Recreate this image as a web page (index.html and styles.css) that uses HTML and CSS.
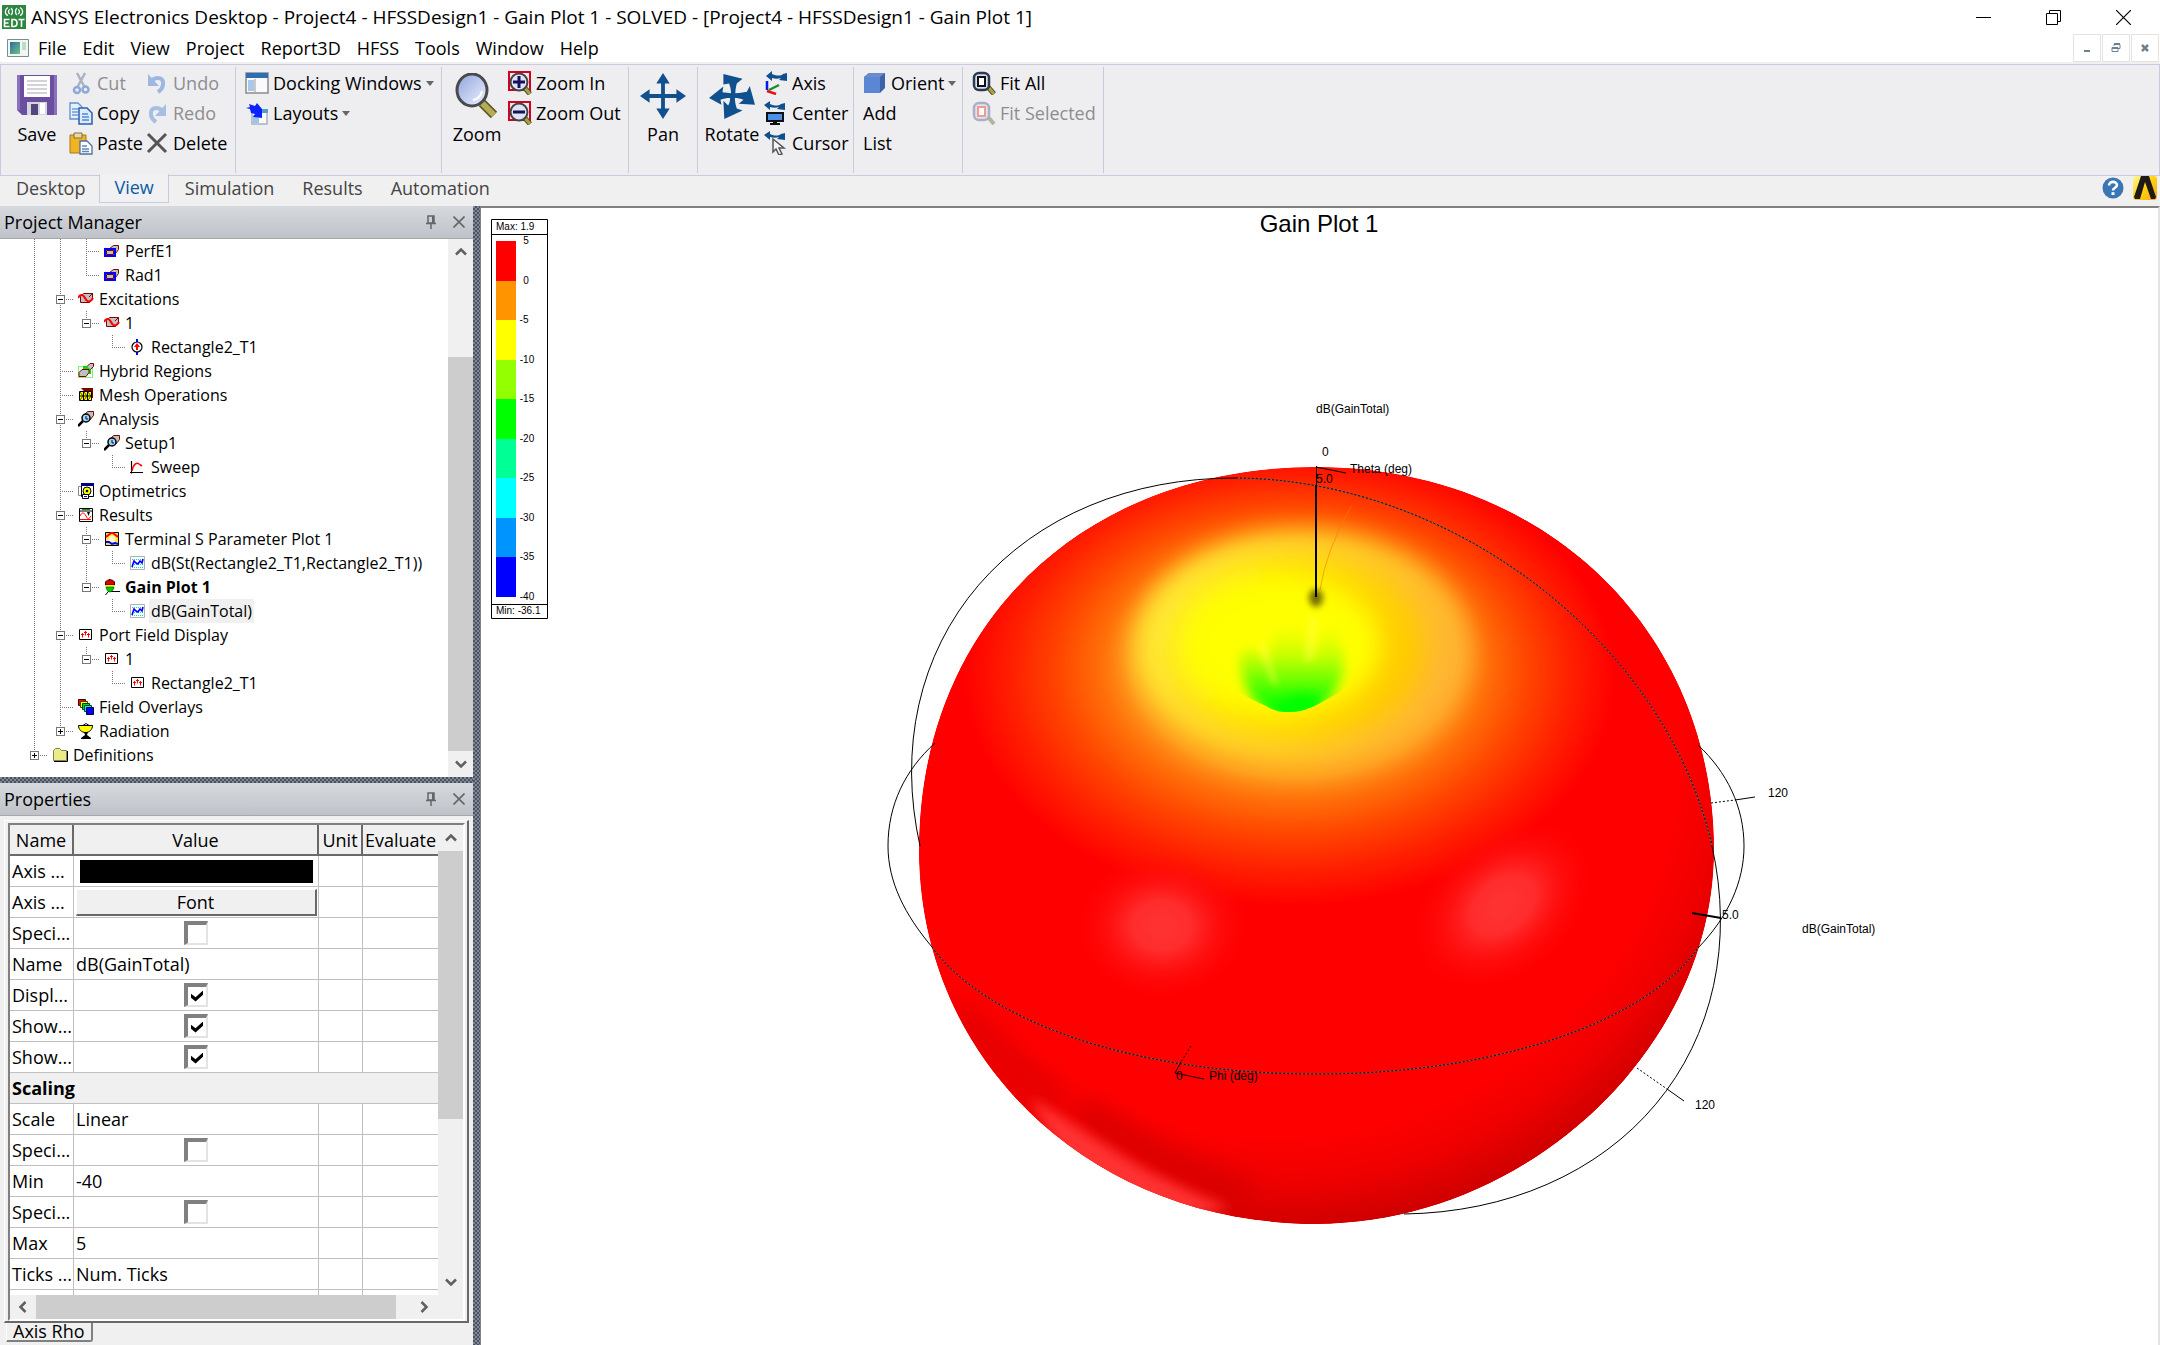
FILE: index.html
```html
<!DOCTYPE html>
<html lang="en">
<head>
<meta charset="utf-8">
<title>ANSYS Electronics Desktop - Project4</title>
<link rel="stylesheet" href="styles.css">
</head>
<body>
<svg class="defs" width="0" height="0" aria-hidden="true">
  <defs>
    <linearGradient id="lens" x1="0" y1="0" x2="1" y2="1"><stop offset="0" stop-color="#8fa3da"/><stop offset=".6" stop-color="#c9d4f2"/><stop offset="1" stop-color="#eef2ff"/></linearGradient>
    <linearGradient id="ansysGold" x1="0" y1="0" x2="1" y2="1"><stop offset="0" stop-color="#fff9a0"/><stop offset=".5" stop-color="#ffd20a"/><stop offset="1" stop-color="#f7a823"/></linearGradient>
    <linearGradient id="teal" x1="0" y1="0" x2="1" y2="1"><stop offset="0" stop-color="#2f6b9a"/><stop offset="1" stop-color="#6fc38a"/></linearGradient>
  </defs>
  <symbol id="i-edt" viewBox="0 0 24 24"><path fill="#2e8540" d="M0 0h24v24H0z"/><g fill="none" stroke="#fff" stroke-width="1.3"><path d="M9 3c2 1.500 2 5.500 0 7M6 2.500c-3.500 2-3.500 6.500 0 8M8 4.500c-2 .8-2 3.500 0 4.300M15 3c-2 1.500-2 5.500 0 7M18 2.500c3.500 2 3.500 6.500 0 8M16 4.500c2 .8 2 3.500 0 4.300"/><path stroke-width="1.600" d="M7.500 14.500h-5v7h5M2.500 18h4M10 14.500v7h2c4 0 4-7 0-7zM16.500 14.500h6M19.500 14.500V22"/></g></symbol>
  <symbol id="i-doc" viewBox="0 0 22 18"><path fill="#f4f6f4" stroke="#7d8a92" d="M.5.5h21v17H.5z"/><path fill="url(#teal)" d="M3 3h10v12H3z"/><path fill="#b9dfc8" d="M15 3h4v8h-4z"/></symbol>
  <symbol id="i-save" viewBox="0 0 40 40"><path fill="#6a4fa0" d="M0 0h40v40H5l-5-5z"/><path fill="#8a72bd" d="M0 0h3v35H0zM37 0h3v40h-3z"/><path fill="#fdfdfe" d="M7 1h26v21H7z"/><path stroke="#c4c4cc" stroke-width="1.500" d="M10 6h20M10 10h20M10 14h20M10 18h20"/><path fill="#d6d6de" d="M10 27h20v13H10z"/><path fill="#55447e" d="M14 29h7v11h-7z"/><path fill="#fff" d="M23 28h5v11h-5z"/></symbol>
  <symbol id="i-cut" viewBox="0 0 24 24"><path stroke="#a9b3c2" stroke-width="2.500" fill="none" d="M8 2l7 13M16 2L9 15"/><g fill="none" stroke="#8ea9d8" stroke-width="2.500"><circle cx="8" cy="19" r="3"/><circle cx="16.500" cy="18.500" r="3"/></g></symbol>
  <symbol id="i-copy" viewBox="0 0 24 24"><path fill="#e6f0fd" stroke="#5f8fd0" stroke-width="1.300" d="M1 2h8l4 4v12H1z"/><path stroke="#6e9bd8" stroke-width="1.500" d="M3 8h6M3 11h6M3 14h6"/><path fill="#dcebff" stroke="#2d5fae" stroke-width="1.500" d="M10 7h8l5 5v11H10z"/><path stroke="#5088d4" stroke-width="1.500" d="M13 13h6M13 16h7M13 19h7"/></symbol>
  <symbol id="i-paste" viewBox="0 0 24 24"><path fill="#f0b323" stroke="#a87817" d="M1 4h16v18H1z"/><path fill="#e8d9a0" stroke="#80703c" d="M5 2h8v5H5z"/><path fill="#fff" stroke="#4f6f9c" stroke-width="1.300" d="M11 10h7l5 5v8H11z"/><path stroke="#5f87bd" stroke-width="1.300" d="M13 15h5M13 18h7M13 20.500h7"/></symbol>
  <symbol id="i-undo" viewBox="0 0 24 24"><path fill="none" stroke="#9db8e0" stroke-width="4" d="M7 9c6-4 12-2 11 5-.4 3-2 5-5 7"/><path fill="#9db8e0" d="M3 3v12h11z"/></symbol>
  <symbol id="i-redo" viewBox="0 0 24 24"><path fill="none" stroke="#a6bee2" stroke-width="4" d="M17 9C11 5 5 7 6 14c.4 3 2 5 5 7"/><path fill="#a6bee2" d="M21 3v12H10z"/></symbol>
  <symbol id="i-delete" viewBox="0 0 24 24"><path stroke="#555" stroke-width="3" fill="none" d="M3 3l18 18M21 3L3 21"/></symbol>
  <symbol id="i-dock" viewBox="0 0 24 24"><path fill="#fafafa" stroke="#8a8a90" stroke-width="1.500" d="M1 2h22v20H1z"/><path fill="#2f6db5" d="M1 2h22v5H1z"/><path fill="#a9c8e8" d="M3 9h6v11H3z"/><path stroke="#999" d="M10 8v13"/></symbol>
  <symbol id="i-layout" viewBox="0 0 24 24"><path fill="#fafafa" stroke="#a8b4c0" stroke-width="1.500" d="M7 9h15v14H7z"/><path fill="#5a9ac8" d="M12 8h11v4H12z"/><path fill="#9bc6e8" d="M8 14h6v8H8z"/><path fill="#0a22ff" d="M1 7l4-1-1-3 6 2 2-3 5 6v9l-9-1 2-3-4-1-1-4z"/></symbol>
  <symbol id="i-zoom" viewBox="0 0 44 46"><path stroke="#5c5620" stroke-width="9" d="M27 30l12 12"/><path stroke="#b5ac58" stroke-width="6" d="M27 30l12 12"/><ellipse cx="17" cy="17" rx="15" ry="16" fill="url(#lens)" stroke="#4a4a4e" stroke-width="3"/><path fill="none" stroke="#fff" stroke-width="2" d="M18 27c5-1 8-4 9-9"/></symbol>
  <symbol id="i-zin" viewBox="0 0 24 24"><path fill="none" stroke="#d4001c" stroke-width="2" d="M1 1h21v18H1z"/><path stroke="#555020" stroke-width="5" d="M16 16l6 7"/><path stroke="#aaa24a" stroke-width="3" d="M17 17l5 6"/><circle cx="11" cy="11" r="8.500" fill="#dfe3f6" stroke="#444" stroke-width="2"/><path stroke="#17105c" stroke-width="3" d="M5 11h12M11 5v12"/></symbol>
  <symbol id="i-zout" viewBox="0 0 24 24"><path fill="none" stroke="#d4001c" stroke-width="2" d="M1 1h21v18H1z"/><path stroke="#555020" stroke-width="5" d="M16 16l6 7"/><path stroke="#aaa24a" stroke-width="3" d="M17 17l5 6"/><circle cx="11" cy="11" r="8.500" fill="#dfe3f6" stroke="#444" stroke-width="2"/><path stroke="#17105c" stroke-width="3" d="M5 11h12"/></symbol>
  <symbol id="i-pan" viewBox="0 0 48 48"><path fill="#10508f" d="M24 0l7 11h-5v11h12v-5l10 7-10 7v-5H26v11h5l-7 11-7-11h5V26H10v5L0 24l10-7v5h12V11h-5z"/></symbol>
  <symbol id="i-rotate" viewBox="0 0 48 48"><path fill="#10508f" d="M15 1l20 5-6 5c-1 4-1.500 7-1.500 10 4 0 8-.5 12-1.500l3-6L48 33l-17-1 5-4c-3-1.500-6-2-9-2 0 4 1 8 2 11l6 2-19 9-1-19 5 5c1.500-3 2-5 2-8-4 0-7 .7-10 2l1 5L0 26l15-12-1 6c3 0 6 1 9 1 0-4-1-7-2-10l-6 1z"/></symbol>
  <symbol id="i-axis" viewBox="0 0 24 24"><path fill="#10508f" d="M2 5l6-5v3c5 2 9 2 11 0l4-1v8l-8-1 2-2c-3 1-6 1-9 0v3z"/><path stroke="#0818f0" stroke-width="2.500" d="M3 10v9"/><path stroke="#e81010" stroke-width="2.500" d="M3 20l9 3"/><path stroke="#1f8a2c" stroke-width="2.500" d="M5 19l10-5"/></symbol>
  <symbol id="i-center" viewBox="0 0 24 24"><path fill="#10508f" d="M0 4l6-4v3c5 2 8 2 11 0l4-1v7l-8-1 2-2c-3 1-6 1-9 0v3z"/><path fill="#111" d="M2 11h18v10H2zM9 21h4v3H9zM6 22h10v2H6z"/><path fill="#4a90e8" d="M4 13h14v6H4z"/></symbol>
  <symbol id="i-cursor" viewBox="0 0 24 24"><path fill="#10508f" d="M0 4l6-4v3c5 2 8 2 11 0l4-1v7l-8-1 2-2c-3 1-6 1-9 0v3z"/><path fill="#f4f4f6" stroke="#555" stroke-width="1.500" d="M9 8v13l3-3 3 6 3-1-3-6h5z"/></symbol>
  <symbol id="i-orient" viewBox="0 0 24 24"><path fill="#3e62a8" d="M1 6l5-4h16v15l-5 5H1z"/><path fill="#5a86d4" d="M1 6h16v16H1z"/><path fill="#6a8cc8" d="M1 6l5-4h16l-5 4z"/></symbol>
  <symbol id="i-fit" viewBox="0 0 24 24"><path stroke="#555020" stroke-width="5" d="M16 16l6 7"/><path stroke="#aaa24a" stroke-width="3" d="M17 17l5 6"/><rect x="2" y="2" width="15" height="17" rx="5" fill="#d8dff4" stroke="#2e3a50" stroke-width="2.500"/><path fill="#fff" stroke="#111" stroke-width="2" d="M6 6h7v9H6z"/></symbol>
  <symbol id="i-fitsel" viewBox="0 0 24 24"><path stroke="#b4b29c" stroke-width="4" d="M16 16l6 7"/><rect x="2" y="2" width="15" height="17" rx="5" fill="#dfe3f0" stroke="#aab0c4" stroke-width="2.500"/><path fill="#fff" stroke="#f49a90" stroke-width="2" d="M6 6h7v9H6z"/></symbol>
  <symbol id="i-help" viewBox="0 0 22 22"><circle cx="11" cy="11" r="10.500" fill="#3a76b4"/><path fill="none" stroke="#fff" stroke-width="2.600" d="M7 8.500c0-5 8-4.500 8-.5 0 3-4 2.500-4 5.500"/><path fill="#fff" d="M9.500 15.200h3v2.800h-3z"/></symbol>
  <symbol id="i-ansys" viewBox="0 0 24 24"><rect width="24" height="24" rx="3" fill="url(#ansysGold)"/><path fill="#1f1a17" d="M8 0h8l7 21-1 2h-4L12 6 7 23H2l-1-2z"/></symbol>
  <symbol id="i-pin" viewBox="0 0 12 14"><path fill="none" stroke="#666" stroke-width="1.500" d="M3 1h6v7H3zM1 8.500h10M6 9v5"/><path fill="#666" d="M7 1h2v7H7z"/></symbol>
  <symbol id="i-x" viewBox="0 0 12 12"><path fill="none" stroke="#666" stroke-width="1.600" d="M.5.5l11 11M11.500.5L.5 11.500"/></symbol>
  <symbol id="i-up" viewBox="0 0 12 10"><path fill="none" stroke="#606060" stroke-width="2.500" d="M1 7.500l5-5 5 5"/></symbol>

  <symbol id="t-box" viewBox="0 0 16 16"><path fill="#c0c0c0" stroke="#800000" d="M5.500 5.500L9.500 2.500h5v4l-3 4"/><path fill="#c0c0c0" stroke="#00f" stroke-width="2" d="M1 6h10v7H1z"/><path fill="none" stroke="#800000" d="M2.500 7.500h7v4h-7z"/></symbol>
  <symbol id="t-exc" viewBox="0 0 16 16"><path fill="#c0c0c0" stroke="#800000" d="M2.500 11.500v-6l3-3h9v6l-3 3z"/><path fill="none" stroke="#800000" d="M11 6l3.500-3.500"/><path fill="none" stroke="#f00" stroke-width="2" d="M0 7c2-4 5-4 7 0s5 5 8 0"/></symbol>
  <symbol id="t-port" viewBox="0 0 16 16"><path stroke="#00f" stroke-width="2" d="M7 0v4M7 12v4"/><circle cx="7" cy="8" r="5" fill="#fff" stroke="#000" stroke-width="1.200"/><path fill="#f00" d="M7 4l3 4H8v3H6V8H4z"/></symbol>
  <symbol id="t-hyb" viewBox="0 0 16 16"><path fill="#00e000" d="M5 3h8v8H5z"/><path fill="none" stroke="#0d0" stroke-dasharray="1 1" d="M.5 3.500h14v11H.5z"/><path fill="#c0c0c0" stroke="#800000" d="M9 3.500l3-3h3.500v3l-3 3M1 12.500v-3l3-3h7v3l-3 4H1z"/></symbol>
  <symbol id="t-mesh" viewBox="0 0 16 16"><path fill="#800000" d="M3 1h12v10h-3z"/><path fill="#ff0" stroke="#000" d="M1.500 4.500h12v9h-12zM1.500 9h12M5.500 4.500v9M9.500 4.500v9"/><path stroke="#000" stroke-width=".7" d="M2 5l3 4M6 5l3 4M10 5l3 4M2 13l3-4M6 13l3-4M10 13l3-4"/></symbol>
  <symbol id="t-ana" viewBox="0 0 16 16"><path fill="#c0c0c0" stroke="#800000" d="M5.500 5l4-4.500h6v4l-4 5"/><path stroke="#000" stroke-width="2.500" d="M0 15l5-5"/><circle cx="8" cy="7" r="4" fill="#9ed8e8" stroke="#000" stroke-width="1.500"/><path fill="none" stroke="#000080" d="M8 5v3h2"/></symbol>
  <symbol id="t-sweep" viewBox="0 0 16 16"><path fill="none" stroke="#000" stroke-width="1.200" d="M1.500 2v12.500M0 13.500h13"/><path fill="none" stroke="#f00" stroke-width="1.400" d="M2 12c1-7 5-9 7-7 1 1 2 1 3 2"/></symbol>
  <symbol id="t-opt" viewBox="0 0 16 16"><path fill="#fff" stroke="#888" d="M.5 3.500h7v9h-7z"/><path fill="#fff" stroke="#000" d="M3.500 1.500h12v12h-12z"/><path fill="#000080" d="M3 0h13v3H3z"/><circle cx="9" cy="8" r="4" fill="#ff0" stroke="#000"/><circle cx="9" cy="8" r="1.300"/><path fill="#fff" stroke="#000" d="M4.500 11.500h6v4h-6z"/><path stroke="#00f" d="M6 13.500h3"/></symbol>
  <symbol id="t-res" viewBox="0 0 16 16"><path fill="#fff" stroke="#000" d="M1.500 1.500h13v13h-13z"/><path fill="#00a000" d="M4 2h8v1H4z"/><path stroke="#000" d="M2 4h12"/><path fill="none" stroke="#f00" d="M2 9c2-4 4-4 6 0s3 3 5 0M2 12.500h11"/><path fill="#000" d="M9 5h3l-1.500 4z"/></symbol>
  <symbol id="t-plot" viewBox="0 0 16 16"><path fill="#ffe040" stroke="#000" d="M1.500 1.500h13v13h-13z"/><circle cx="8" cy="8" r="3.500" fill="#fff8c0"/><path fill="none" stroke="#f00" stroke-width="2" d="M2 6l5-4h2l5 4"/><path fill="none" stroke="#00f" stroke-width="2" d="M2 11l3 0 3 2 3-1 3 1"/></symbol>
  <symbol id="t-trace" viewBox="0 0 16 16"><path fill="#fff" stroke="#b0b0b0" d="M.5 1.500h14v13H.5z"/><path stroke="#0dd" stroke-dasharray="1 1" d="M2 4.500h11M2 9.500h11M2 12.500h11"/><path fill="none" stroke="#00f" stroke-width="1.600" d="M2 12l2-6 2 2 2 1 2-3 2 2 1-4"/></symbol>
  <symbol id="t-gain" viewBox="0 0 16 16"><path fill="none" stroke="#000" d="M5.500 0v11l-4 5M6 12.500h10"/><path fill="#d00" stroke="#400" d="M1.500 3c2-3 7-3 9 0v3h-9z"/><path fill="#ff0" d="M2 6h8v2H2z"/><path fill="#0c0" stroke="#040" stroke-width=".6" d="M2 8h8c0 3-3 5-4 5s-4-2-4-5z"/></symbol>
  <symbol id="t-pfd" viewBox="0 0 16 16"><path fill="#fff" stroke="#000" d="M1.500 2.500h12v10h-12z"/><path fill="none" stroke="#f00" d="M4.500 10.500V6M7.500 8.500V4M10.500 10.500V6M3 7.500h3M6 5.500h3M9 7.500h3"/></symbol>
  <symbol id="t-field" viewBox="0 0 16 16"><path fill="#f00" stroke="#400" d="M.5.5h7v6h-7z"/><path fill="#ff0" stroke="#440" d="M2.500 2.500h7v6h-7z"/><path fill="#0d0" stroke="#040" d="M4.500 4.500h7v6h-7z"/><path fill="#0ee" stroke="#044" d="M6.500 6.500h7v6h-7z"/><path fill="#00f" stroke="#004" d="M8.500 8.500h7v7h-7z"/></symbol>
  <symbol id="t-rad" viewBox="0 0 16 16"><path fill="none" stroke="#000" d="M4 3l4-2.500L12 3"/><path fill="#ff0" stroke="#000" d="M.5 2.500h14c0 4-3 7-7 7s-7-3-7-7z"/><path fill="#000" d="M6 9h4l-1 3 4 3v1H3v-1l4-3z"/></symbol>
  <symbol id="t-fold" viewBox="0 0 16 16"><path fill="#ecec86" stroke="#808060" d="M1.500 13.500v-10l2-2h4l2 2h5v10z"/><path fill="none" stroke="#000" d="M2 14.500h13.500V4"/></symbol>
</svg>

<div class="app">
  <header class="titlebar">
    <svg class="i24"><use href="#i-edt"/></svg>
    <span class="title">ANSYS Electronics Desktop - Project4 - HFSSDesign1 - Gain Plot 1 - SOLVED - [Project4 - HFSSDesign1 - Gain Plot 1]</span>
    <div class="winctl">
      <button aria-label="Minimize"><svg width="15" height="15"><path stroke="#000" d="M0 7.500h15"/></svg></button>
      <button aria-label="Restore"><svg width="15" height="15"><path fill="none" stroke="#000" d="M.5 3.500h11v11H.5zM3.500 3V.5h11v11H12"/></svg></button>
      <button aria-label="Close"><svg width="15" height="15"><path stroke="#000" stroke-width="1.200" d="M0 0l15 15M15 0L0 15"/></svg></button>
    </div>
  </header>
  <nav class="menubar">
    <svg class="docicon"><use href="#i-doc"/></svg>
    <button>File</button><button>Edit</button><button>View</button><button>Project</button><button>Report3D</button><button>HFSS</button><button>Tools</button><button>Window</button><button>Help</button>
    <div class="mdictl">
      <button aria-label="Minimize window"><svg width="10" height="10"><path fill="#718090" d="M2 7h6v2H2z"/></svg></button>
      <button aria-label="Restore window"><svg width="10" height="10"><path fill="none" stroke="#718090" d="M1 4.500h6v4H1zM3 3V1.500h6v4H7"/><path stroke="#718090" stroke-width="2" d="M1 5h6M3 1h6"/></svg></button>
      <button aria-label="Close window"><svg width="10" height="10"><path stroke="#718090" stroke-width="2.500" d="M2 2l6 6M8 2L2 8"/></svg></button>
    </div>
  </nav>

  <section class="ribbon">
    <div class="group g-clip">
      <button class="big"><svg class="i40"><use href="#i-save"/></svg>Save</button>
      <div class="col c-copy">
        <button class="off"><svg class="i24"><use href="#i-cut"/></svg>Cut</button>
        <button><svg class="i24"><use href="#i-copy"/></svg>Copy</button>
        <button><svg class="i24"><use href="#i-paste"/></svg>Paste</button>
      </div>
      <div class="col">
        <button class="off"><svg class="i24"><use href="#i-undo"/></svg>Undo</button>
        <button class="off"><svg class="i24"><use href="#i-redo"/></svg>Redo</button>
        <button><svg class="i24"><use href="#i-delete"/></svg>Delete</button>
      </div>
    </div>
    <div class="group g-win">
      <div class="col">
        <button><svg class="i24"><use href="#i-dock"/></svg>Docking Windows<span class="caret"></span></button>
        <button><svg class="i24"><use href="#i-layout"/></svg>Layouts<span class="caret"></span></button>
      </div>
    </div>
    <div class="group g-zoom">
      <button class="big"><svg class="i46"><use href="#i-zoom"/></svg>Zoom</button>
      <div class="col">
        <button><svg class="i24"><use href="#i-zin"/></svg>Zoom In</button>
        <button><svg class="i24"><use href="#i-zout"/></svg>Zoom Out</button>
      </div>
    </div>
    <div class="group g-pan">
      <button class="big"><svg class="i46"><use href="#i-pan"/></svg>Pan</button>
    </div>
    <div class="group g-rot">
      <button class="big"><svg class="i46"><use href="#i-rotate"/></svg>Rotate</button>
      <div class="col">
        <button><svg class="i24"><use href="#i-axis"/></svg>Axis</button>
        <button><svg class="i24"><use href="#i-center"/></svg>Center</button>
        <button><svg class="i24"><use href="#i-cursor"/></svg>Cursor</button>
      </div>
    </div>
    <div class="group g-ori">
      <div class="col">
        <button><svg class="i24"><use href="#i-orient"/></svg>Orient<span class="caret"></span></button>
        <button>Add</button>
        <button>List</button>
      </div>
    </div>
    <div class="group g-fit">
      <div class="col">
        <button><svg class="i24"><use href="#i-fit"/></svg>Fit All</button>
        <button class="off"><svg class="i24"><use href="#i-fitsel"/></svg>Fit Selected</button>
      </div>
    </div>
  </section>

  <nav class="tabs">
    <button>Desktop</button><button class="on">View</button><button>Simulation</button><button>Results</button><button>Automation</button>
    <div class="tabicons">
      <button aria-label="Help"><svg class="i22"><use href="#i-help"/></svg></button>
      <button aria-label="ANSYS"><svg class="i24"><use href="#i-ansys"/></svg></button>
    </div>
  </nav>

  <main class="work">
    <aside class="side">
      <section class="pane">
        <header class="panehead"><h2>Project Manager</h2><button aria-label="Pin"><svg class="pin"><use href="#i-pin"/></svg></button><button aria-label="Close pane"><svg class="x"><use href="#i-x"/></svg></button></header>
        <div class="treebox">
          <ul class="tree">
            <li><i class="v"></i><i class="v"></i><i class="t"></i><svg><use href="#t-box"/></svg><span>PerfE1</span></li>
            <li><i class="v"></i><i class="v"></i><i class="l"></i><svg><use href="#t-box"/></svg><span>Rad1</span></li>
            <li><i class="v"></i><i class="t"><b class="minus"></b></i><svg><use href="#t-exc"/></svg><span>Excitations</span></li>
            <li><i class="v"></i><i class="v"></i><i class="l"><b class="minus"></b></i><svg><use href="#t-exc"/></svg><span>1</span></li>
            <li><i class="v"></i><i class="v"></i><i></i><i class="l"></i><svg><use href="#t-port"/></svg><span>Rectangle2_T1</span></li>
            <li><i class="v"></i><i class="t"></i><svg><use href="#t-hyb"/></svg><span>Hybrid Regions</span></li>
            <li><i class="v"></i><i class="t"></i><svg><use href="#t-mesh"/></svg><span>Mesh Operations</span></li>
            <li><i class="v"></i><i class="t"><b class="minus"></b></i><svg><use href="#t-ana"/></svg><span>Analysis</span></li>
            <li><i class="v"></i><i class="v"></i><i class="l"><b class="minus"></b></i><svg><use href="#t-ana"/></svg><span>Setup1</span></li>
            <li><i class="v"></i><i class="v"></i><i></i><i class="l"></i><svg><use href="#t-sweep"/></svg><span>Sweep</span></li>
            <li><i class="v"></i><i class="t"></i><svg><use href="#t-opt"/></svg><span>Optimetrics</span></li>
            <li><i class="v"></i><i class="t"><b class="minus"></b></i><svg><use href="#t-res"/></svg><span>Results</span></li>
            <li><i class="v"></i><i class="v"></i><i class="t"><b class="minus"></b></i><svg><use href="#t-plot"/></svg><span>Terminal S Parameter Plot 1</span></li>
            <li><i class="v"></i><i class="v"></i><i class="v"></i><i class="l"></i><svg><use href="#t-trace"/></svg><span>dB(St(Rectangle2_T1,Rectangle2_T1))</span></li>
            <li><i class="v"></i><i class="v"></i><i class="l"><b class="minus"></b></i><svg><use href="#t-gain"/></svg><span class="strong">Gain Plot 1</span></li>
            <li><i class="v"></i><i class="v"></i><i></i><i class="l"></i><svg><use href="#t-trace"/></svg><span class="sel">dB(GainTotal)</span></li>
            <li><i class="v"></i><i class="t"><b class="minus"></b></i><svg><use href="#t-pfd"/></svg><span>Port Field Display</span></li>
            <li><i class="v"></i><i class="v"></i><i class="l"><b class="minus"></b></i><svg><use href="#t-pfd"/></svg><span>1</span></li>
            <li><i class="v"></i><i class="v"></i><i></i><i class="l"></i><svg><use href="#t-pfd"/></svg><span>Rectangle2_T1</span></li>
            <li><i class="v"></i><i class="t"></i><svg><use href="#t-field"/></svg><span>Field Overlays</span></li>
            <li><i class="v"></i><i class="l"><b class="plus"></b></i><svg><use href="#t-rad"/></svg><span>Radiation</span></li>
            <li><i class="l"><b class="plus"></b></i><svg><use href="#t-fold"/></svg><span>Definitions</span></li>
          </ul>
          <div class="vscroll">
            <button aria-label="Scroll up"><svg class="arw"><use href="#i-up"/></svg></button>
            <div class="track tree-track"><div class="thumb"></div></div>
            <button aria-label="Scroll down"><svg class="arw down"><use href="#i-up"/></svg></button>
          </div>
        </div>
      </section>
      <div class="hsplit"></div>
      <section class="pane props">
        <header class="panehead"><h2>Properties</h2><button aria-label="Pin"><svg class="pin"><use href="#i-pin"/></svg></button><button aria-label="Close pane"><svg class="x"><use href="#i-x"/></svg></button></header>
        <div class="frame">
          <div class="grid">
            <div class="tablebox">
              <table>
                <colgroup><col class="w-name"><col class="w-value"><col class="w-unit"><col class="w-eval"></colgroup>
                <thead><tr><th>Name</th><th>Value</th><th>Unit</th><th class="last">Evaluate</th></tr></thead>
                <tbody>
                  <tr><td>Axis ...</td><td class="ctl"><button class="swatch" aria-label="Axis color"></button></td><td></td><td></td></tr>
                  <tr><td>Axis ...</td><td class="ctl"><button class="fontbtn">Font</button></td><td></td><td></td></tr>
                  <tr><td><label for="k1">Speci...</label></td><td class="ctl"><input type="checkbox" id="k1"></td><td></td><td></td></tr>
                  <tr><td>Name</td><td>dB(GainTotal)</td><td></td><td></td></tr>
                  <tr><td><label for="k2">Displ...</label></td><td class="ctl"><input type="checkbox" id="k2" checked></td><td></td><td></td></tr>
                  <tr><td><label for="k3">Show...</label></td><td class="ctl"><input type="checkbox" id="k3" checked></td><td></td><td></td></tr>
                  <tr><td><label for="k4">Show...</label></td><td class="ctl"><input type="checkbox" id="k4" checked></td><td></td><td></td></tr>
                  <tr><td colspan="4" class="section">Scaling</td></tr>
                  <tr><td>Scale</td><td>Linear</td><td></td><td></td></tr>
                  <tr><td><label for="k5">Speci...</label></td><td class="ctl"><input type="checkbox" id="k5"></td><td></td><td></td></tr>
                  <tr><td>Min</td><td>-40</td><td></td><td></td></tr>
                  <tr><td><label for="k6">Speci...</label></td><td class="ctl"><input type="checkbox" id="k6"></td><td></td><td></td></tr>
                  <tr><td>Max</td><td>5</td><td></td><td></td></tr>
                  <tr><td>Ticks ...</td><td>Num. Ticks</td><td></td><td></td></tr>
                  <tr><td></td><td></td><td></td><td></td></tr>
                </tbody>
              </table>
            </div>
            <div class="vscroll">
              <button aria-label="Scroll up"><svg class="arw"><use href="#i-up"/></svg></button>
              <div class="track prop-track"><div class="thumb"></div></div>
              <button aria-label="Scroll down"><svg class="arw down"><use href="#i-up"/></svg></button>
            </div>
            <div class="hscroll">
              <button aria-label="Scroll left"><svg class="arw left"><use href="#i-up"/></svg></button>
              <div class="htrack"><div class="thumb"></div></div>
              <button aria-label="Scroll right"><svg class="arw right"><use href="#i-up"/></svg></button>
            </div>
          </div>
        </div>
        <div class="sheettabs"><button>Axis Rho</button></div>
      </section>
    </aside>
    <div class="vsplit"></div>
    <section class="view">
      <svg class="plot" viewBox="481 208 1677 1137" preserveAspectRatio="xMidYMin meet" role="img" aria-label="Gain Plot 1">
        <defs>
          <radialGradient id="hot" gradientUnits="userSpaceOnUse" cx="0" cy="0" r="1" fx="0.030" fy="-0.130" gradientTransform="translate(1290 678) scale(325 228)">
            <stop offset="0" stop-color="#ffa01c"/><stop offset=".5" stop-color="#ff961c"/><stop offset=".6" stop-color="#ff6d08"/><stop offset=".72" stop-color="#ff4600"/><stop offset=".86" stop-color="#ff2000"/><stop offset="1" stop-color="#ff0000"/>
          </radialGradient>
          <radialGradient id="shade" gradientUnits="userSpaceOnUse" cx="0" cy="0" r="1" gradientTransform="translate(1275 740) scale(500 490)">
            <stop offset=".8" stop-opacity="0"/><stop offset=".9" stop-opacity=".06"/><stop offset="1" stop-opacity=".19"/>
          </radialGradient>
          <radialGradient id="glow"><stop offset="0" stop-color="#ff3434"/><stop offset=".35" stop-color="#ff2c2c"/><stop offset=".7" stop-color="#ff1212" stop-opacity=".6"/><stop offset="1" stop-color="#ff0808" stop-opacity="0"/></radialGradient>
          <linearGradient id="rim" x1="0" y1=".2" x2="1" y2=".5"><stop offset="0" stop-color="#fff236"/><stop offset=".35" stop-color="#ffd828"/><stop offset=".7" stop-color="#ffc428"/><stop offset="1" stop-color="#ffb432"/></linearGradient>
          <linearGradient id="mid" x1="0" y1=".2" x2="1" y2=".5"><stop offset="0" stop-color="#ffff10"/><stop offset=".5" stop-color="#ffe000"/><stop offset="1" stop-color="#ffc800"/></linearGradient>
          <linearGradient id="leaf" gradientUnits="userSpaceOnUse" x1="0" y1="622" x2="0" y2="706"><stop offset="0" stop-color="#e0ff00" stop-opacity="0"/><stop offset=".4" stop-color="#b8ff00" stop-opacity=".8"/><stop offset=".65" stop-color="#78ff00"/><stop offset="1" stop-color="#00ff00"/></linearGradient>
          <filter id="b3" x="-50%" y="-50%" width="200%" height="200%"><feGaussianBlur stdDeviation="3"/></filter>
          <filter id="b6" x="-50%" y="-50%" width="200%" height="200%"><feGaussianBlur stdDeviation="6"/></filter>
          <filter id="b12" x="-50%" y="-50%" width="200%" height="200%"><feGaussianBlur stdDeviation="12"/></filter>
          <path id="body" d="M919 850C919 625 1082 467 1316 467C1544 467 1714 630 1714 850C1714 1048 1527 1224 1316 1224C1092 1224 919 1061 919 850Z"/>
          <path id="thetaFront" d="M1236 478A428 341 32.400 0 1 1712 846"/>
          <path id="phiFront" d="M932 947C985 1020 1130 1074 1316 1074S1647 1020 1698 948"/>
          <clipPath id="ball"><use href="#body"/></clipPath>
          <clipPath id="bowl"><path d="M1200 600H1390V640C1362 680 1342 692 1322 702Q1306 712 1287 712Q1275 712 1266 706C1240 695 1220 680 1200 670Z"/></clipPath>
        </defs>

        <text class="ptitle" x="1319" y="232" text-anchor="middle">Gain Plot 1</text>

        <g class="legend">
          <path class="ln" d="M491.500 219.500h56v399h-56zM491.500 234.500h56M491.500 604.500h56"/>
          <g stroke="none">
            <path fill="#f00" d="M496 241h20v40h-20z"/><path fill="#ff9400" d="M496 281h20v39h-20z"/><path fill="#ff0" d="M496 320h20v40h-20z"/><path fill="#94ff00" d="M496 360h20v39h-20z"/><path fill="#0f0" d="M496 399h20v40h-20z"/><path fill="#00ff94" d="M496 439h20v39h-20z"/><path fill="#0ff" d="M496 478h20v40h-20z"/><path fill="#0094ff" d="M496 518h20v39h-20z"/><path fill="#00f" d="M496 557h20v40h-20z"/>
          </g>
          <text x="496" y="230">Max: 1.9</text>
          <g text-anchor="middle"><text x="526" y="244">5</text><text x="526" y="284">0</text><text x="524" y="323">-5</text><text x="527" y="363">-10</text><text x="527" y="402">-15</text><text x="527" y="442">-20</text><text x="527" y="481">-25</text><text x="527" y="521">-30</text><text x="527" y="560">-35</text><text x="527" y="600">-40</text></g>
          <text x="496" y="614">Min: -36.1</text>
        </g>

        <g clip-path="url(#ball)">
          <use href="#body" fill="#f00"/>
          <use href="#body" fill="url(#hot)"/>
          <ellipse cx="1302" cy="650" rx="168" ry="119" fill="url(#rim)" filter="url(#b12)"/>
          <ellipse cx="1300" cy="650" rx="124" ry="90" fill="url(#mid)" filter="url(#b12)"/>
          <ellipse cx="1284" cy="646" rx="96" ry="68" fill="#ff0" filter="url(#b12)"/>
          <g clip-path="url(#bowl)">
            <path fill="url(#leaf)" filter="url(#b6)" d="M1270 714C1252 702 1240 684 1240 656Q1252 640 1268 664Q1272 622 1290 612Q1304 618 1312 660Q1320 630 1332 622Q1348 650 1342 676C1334 700 1312 720 1290 722Z"/>
            <path fill="#0f0" filter="url(#b6)" d="M1268 724q20-40 50-26v28z"/>
          </g>
          <path fill="#ff4" opacity=".45" filter="url(#b3)" d="M1257 642l8 2 14 42-8-4zM1309 615l9 4-4 40-10 4z"/>
          <ellipse cx="1162" cy="926" rx="84" ry="72" fill="url(#glow)"/>
          <ellipse cx="1503" cy="905" rx="100" ry="70" fill="url(#glow)" transform="rotate(-40 1503 905)"/>
          <use href="#body" fill="url(#shade)"/>
          <path fill="none" stroke="#e00000" stroke-width="30" opacity=".8" filter="url(#b12)" d="M960 1010Q1010 1070 1060 1100"/>
          <path fill="none" stroke="#d40000" stroke-width="26" opacity=".9" filter="url(#b12)" d="M1080 1108Q1150 1160 1250 1196"/>
          <path fill="#ff3232" filter="url(#b6)" d="M1030 1098C1070 1120 1110 1150 1150 1172C1175 1184 1200 1196 1230 1208C1150 1230 1080 1200 1030 1098Z"/>
          <path fill="none" stroke="#ff7a00" opacity=".6" d="M1320 590Q1326 550 1352 505"/>
          <ellipse cx="1316" cy="598" rx="7" ry="9" fill="#504800" opacity=".8" filter="url(#b3)"/>
        </g>

        <path class="ln" d="M920 846A428 341 32.400 0 1 1236 478M1712 846A428 341 32.400 0 1 1404 1214"/>
        <path class="ln" d="M935 743C905 770 888 805 888 846C888 882 905 915 932 947M1698 745C1727 772 1744 807 1744 846C1744 882 1728 917 1698 948"/>
        <use class="under" href="#thetaFront"/><use class="dots" href="#thetaFront"/>
        <use class="under" href="#phiFront"/><use class="dots" href="#phiFront"/>
        <path class="ln" d="M1316.500 466V485M1316 467L1346 473M1735 800L1755 797M1667 1089L1684 1101M1181 1062L1175 1073L1204 1079"/>
        <path class="axis" d="M1316 485V597M1692 913L1721 918"/>
        <path class="dots" d="M1711 803L1735 800M1637 1068L1667 1089M1191 1046L1181 1062"/>

        <g class="labels">
          <text x="1316" y="413">dB(GainTotal)</text><text x="1322" y="456">0</text><text x="1350" y="473">Theta (deg)</text><text x="1316" y="483">5.0</text>
          <text x="1768" y="797">120</text><text x="1722" y="919">5.0</text><text x="1802" y="933">dB(GainTotal)</text><text x="1695" y="1109">120</text>
          <text x="1176" y="1080">0</text><text x="1209" y="1080">Phi (deg)</text>
        </g>
      </svg>
    </section>
  </main>
</div>
</body>
</html>
```
FILE: styles.css
```css
* { box-sizing: border-box; }
body { margin: 0; background: #f0f0f0; color: #000; font: 18px/24px "Open Sans", "Noto Sans", sans-serif; }
button { font: inherit; color: inherit; background: none; border: 0; padding: 0; margin: 0; }
svg { display: block; flex: none; }
.defs { position: absolute; }
.app { display: flex; flex-direction: column; height: 100vh; overflow: hidden; }

.i22 { width: 22px; height: 22px; }
.i24 { width: 24px; height: 24px; }
.i40 { width: 40px; height: 44px; }
.i46 { width: 46px; height: 46px; }

/* title and menu */
.titlebar { display: flex; align-items: center; height: 34px; padding-left: 2px; gap: 5px; background: #fff; white-space: nowrap; flex: none; }
.title { font-size: 19px; }
.winctl { display: flex; gap: 55px; margin-left: auto; padding-right: 29px; }
.menubar { display: flex; align-items: center; height: 28px; padding-left: 7px; gap: 16px; background: #fff; flex: none; }
.docicon { width: 22px; height: 18px; margin-right: -7px; }
.mdictl { display: flex; gap: 1px; margin-left: auto; padding-right: 1px; }
.mdictl button { display: grid; place-items: center; width: 28px; height: 28px; border: 1px solid #e3e3e3; }

/* ribbon */
.ribbon { display: flex; height: 112px; margin-top: 2px; padding-top: 2px; background: #eeeef1; border: 1px solid #c9cbdd; flex: none; white-space: nowrap; }
.group { display: flex; align-items: flex-start; height: 106px; border-right: 1px solid #c9cbdd; }
.group .col { display: flex; flex-direction: column; padding-top: 1px; }
.group .col button { display: flex; align-items: center; height: 30px; gap: 4px; }
.group .big { display: flex; flex-direction: column; align-items: center; justify-content: space-between; height: 79px; padding-top: 6px; }
.off { color: #8d8d90; }
.caret { border: 4px solid transparent; border-top: 5px solid #666; border-bottom: 0; }
.g-clip { width: 235px; padding-left: 12px; }
.g-clip .big { width: 48px; margin-right: 8px; }
.c-copy { width: 76px; }
.g-win { width: 206px; padding-left: 9px; }
.g-zoom { width: 187px; padding-left: 10px; }
.g-zoom .big { width: 50px; margin-right: 6px; }
.g-pan { width: 69px; justify-content: center; }
.g-rot { width: 156px; padding-left: 8px; }
.g-rot .big { width: 52px; margin-right: 6px; }
.g-ori { width: 109px; padding-left: 9px; }
.g-fit { width: 141px; padding-left: 9px; }

/* ribbon tabs */
.tabs { display: flex; align-items: flex-start; height: 30px; padding-left: 2px; color: #444; flex: none; }
.tabs > button { height: 24px; padding: 0 14px; }
.tabs > .on { margin: -2px 2px 0 0; height: 29px; padding: 0 14px 2px; color: #0b5c9e; background: #f1f1f4; border: 1px solid #c9cbdd; border-top: 0; }
.tabicons { display: flex; align-items: center; gap: 9px; margin-left: auto; padding: 0 3px 0 0; }

/* work area */
.work { display: flex; flex: 1; min-height: 0; }
.side { display: flex; flex-direction: column; width: 473px; flex: none; }
.vsplit, .hsplit { background: #85888c conic-gradient(#46536a 25%, transparent 0 50%, #46536a 0 75%, transparent 0) 0 0 / 4px 4px; flex: none; }
.vsplit { width: 7px; }
.hsplit { height: 6px; }
.pane { display: flex; flex-direction: column; }
.panehead { display: flex; align-items: center; height: 33px; padding: 0 8px 0 4px; gap: 16px; background: linear-gradient(#d6d9de, #bfc3c9); border-bottom: 1px solid #a8a8a8; flex: none; }
.panehead h2 { margin: 0 auto 0 0; font-size: 18px; font-weight: 400; }
.pin { width: 12px; height: 14px; }
.x { width: 12px; height: 12px; }

.treebox { display: flex; background: #fff; }
.tree { flex: 1; margin: 0; padding: 0 0 10px 21px; list-style: none; font-size: 16px; white-space: nowrap; overflow: hidden; }
.tree li { display: flex; align-items: center; height: 24px; }
.tree svg { width: 16px; height: 16px; margin: 0 3px 0 5px; }
.tree span { padding: 0 2px; }
.tree .strong { font-weight: 700; }
.tree .sel { background: #f0f0f0; }
.tree i { display: grid; place-items: center; width: 26px; height: 24px; flex: none; background-repeat: no-repeat; --v: repeating-linear-gradient(#777 0 1px, transparent 1px 2px); --h: repeating-linear-gradient(90deg, #777 0 1px, transparent 1px 2px); }
.tree .v { background-image: var(--v); background-size: 1px 24px; background-position: 13px 0; }
.tree .t { background-image: var(--v), var(--h); background-size: 1px 24px, 13px 1px; background-position: 13px 0, 13px 12px; }
.tree .l { background-image: var(--v), var(--h); background-size: 1px 12px, 13px 1px; background-position: 13px 0, 13px 12px; }
.tree b { width: 9px; height: 9px; margin: 1px 0 0 1px; border: 1px solid #777; background: #fff linear-gradient(#000, #000) center / 5px 1px no-repeat; }
.tree .plus { background-image: linear-gradient(#000, #000), linear-gradient(#000, #000); background-size: 5px 1px, 1px 5px; }

.vscroll { display: flex; flex-direction: column; width: 25px; background: #f0f0f0; flex: none; }
.vscroll button { display: grid; place-items: center; height: 26px; flex: none; }
.track { flex: 1; display: flex; flex-direction: column; }
.thumb { background: #cdcdcd; }
.tree-track { justify-content: flex-end; }
.tree-track .thumb { height: 81%; }
.prop-track .thumb { height: 64%; }
.arw { width: 12px; height: 10px; }
.down { transform: rotate(180deg); }
.left { transform: rotate(-90deg); }
.right { transform: rotate(90deg); }

/* properties grid */
.props { flex: 1; min-height: 0; }
.frame { flex: 1; min-height: 0; margin: 4px 4px 0; padding: 2px 2px 0 3px; border: 1px solid #fff; border-right: 2px solid #696969; border-bottom: 2px solid #696969; }
.grid { display: grid; grid-template: minmax(0, 1fr) 24px / minmax(0, 1fr) 25px; height: 100%; border: 2px solid #808080; border-right-color: #fff; border-bottom-color: #fff; }
.tablebox { overflow: hidden; background: #fff; }
table { width: 100%; table-layout: fixed; border-collapse: separate; border-spacing: 0; }
.w-name { width: 64px; }
.w-value { width: 245px; }
.w-unit { width: 44px; }
th, td { height: 31px; padding: 0 0 0 2px; border-right: 1px solid #c0c0c0; border-bottom: 1px solid #c0c0c0; text-align: left; white-space: nowrap; overflow: hidden; line-height: 24px; }
th { padding: 0; font-weight: 400; text-align: center; background: #f0f0f0; border-right: 2px solid #696969; border-bottom: 2px solid #696969; }
th.last { padding-left: 2px; text-align: left; }
th.last, td:last-child { border-right: 0; }
.section { background: #f0f0f0; font-weight: 700; }
.ctl { padding: 0; text-align: center; }
.swatch { display: block; width: 233px; height: 23px; margin: 0 auto; background: #000; }
.fontbtn { display: block; width: 241px; height: 27px; margin: 0 auto; background: #f0f0f0; border: 1px solid #fff; border-right: 2px solid #696969; border-bottom: 2px solid #696969; line-height: 22px; }
input[type=checkbox] { display: grid; place-items: center; appearance: none; width: 24px; height: 24px; margin: 0 auto; background: #fff; border: 2px solid #e3e3e3; border-top: 4px solid #808080; border-left: 4px solid #808080; }
input[type=checkbox]:checked::before { content: ""; width: 12px; height: 11px; background: #000; clip-path: polygon(0 30%, 38% 62%, 100% 0, 100% 38%, 38% 100%, 0 66%); }
.hscroll { grid-column: 1 / -1; display: flex; background: #f0f0f0; padding-right: 26px; }
.hscroll button { display: grid; place-items: center; width: 26px; flex: none; }
.htrack { flex: 1; display: flex; }
.htrack .thumb { width: 96%; }
.sheettabs { height: 22px; padding-left: 6px; flex: none; }
.sheettabs button { display: block; height: 19px; padding: 0 6px; line-height: 17px; border: 1px solid #fff; border-top: 0; border-right: 2px solid #808080; border-bottom: 2px solid #808080; border-bottom-right-radius: 3px; }

/* plot */
.view { flex: 1; min-width: 0; background: #fff; border: 1px solid #808080; border-top: 2px solid #808080; border-right: 2px solid #e3e3e3; border-bottom: 0; overflow: hidden; }
.plot { width: 100%; height: auto; font-family: "Liberation Sans", Arial, sans-serif; font-size: 12px; }
.ptitle { font-size: 24px; }
.legend text { font-size: 10px; }
.ln { fill: none; stroke: #000; stroke-width: 1; }
.dots { fill: none; stroke: #000; stroke-width: 1; stroke-dasharray: 2 2; }
.under { fill: none; stroke: #6a6a6a; stroke-width: 1; }
.axis { fill: none; stroke: #000; stroke-width: 2; }
```
